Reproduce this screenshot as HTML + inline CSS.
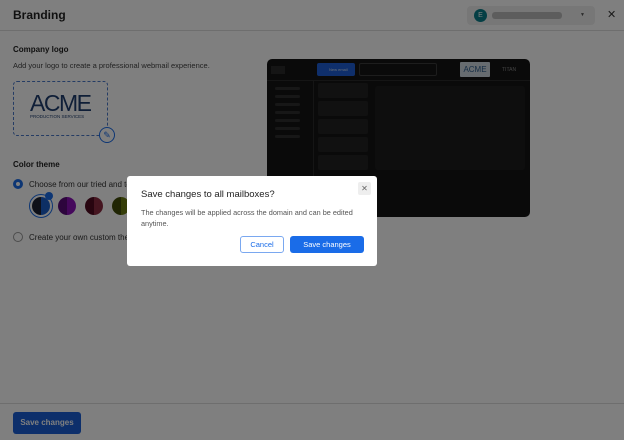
<!DOCTYPE html>
<html><head><style>
*{box-sizing:border-box;margin:0;padding:0}
body{width:624px;height:440px;overflow:hidden;font-family:"Liberation Sans",sans-serif;background:#fff;position:relative;color:#222}
.a{position:absolute}
.ov{position:absolute;left:0;top:0;width:624px;height:440px;background:#000;opacity:0.5}
.bar{height:3px;background:#2e2e2e;border-radius:2px}
</style></head><body>
<div class="a" style="left:13px;top:8px;font-size:12px;font-weight:bold;color:#222">Branding</div>
<div class="a" style="left:467px;top:6px;width:128px;height:19px;background:#eee;border-radius:4px"></div>
<div class="a" style="left:474px;top:9px;width:13px;height:13px;border-radius:50%;background:#0b7f8a;color:#fff;font-size:7px;text-align:center;line-height:13px">E</div>
<div class="a" style="left:492px;top:12px;width:70px;height:7px;background:#bbb;border-radius:3px"></div>
<div class="a" style="left:580px;top:12px;font-size:5px;color:#555">▼</div>
<div class="a" style="left:607px;top:8px;font-size:11px;color:#333">✕</div>
<div class="a" style="left:0;top:30px;width:624px;height:1px;background:#ddd"></div>
<div class="a" style="left:13px;top:45px;font-size:8px;font-weight:bold">Company logo</div>
<div class="a" style="left:13px;top:61px;font-size:7.5px;color:#444">Add your logo to create a professional webmail experience.</div>
<div class="a" style="left:13px;top:81px;width:95px;height:55px;border:1px dashed #4a78c8;border-radius:4px"></div>
<div class="a" style="left:30px;top:90px;font-size:23px;color:#1e3d6e;letter-spacing:-1.5px;font-weight:normal">ACME</div>
<div class="a" style="left:30px;top:114px;font-size:4.5px;color:#1e3d6e">PRODUCTION SERVICES</div>
<div class="a" style="left:99px;top:127px;width:16px;height:16px;border-radius:50%;background:#fff;border:1px solid #1a6ce8;color:#1a6ce8;font-size:9px;text-align:center;line-height:14px">✎</div>
<div class="a" style="left:13px;top:160px;font-size:8px;font-weight:bold">Color theme</div>
<div class="a" style="left:13px;top:179px;width:10px;height:10px;border-radius:50%;border:3px solid #1a6ce8"></div>
<div class="a" style="left:29px;top:180px;font-size:8px;color:#333">Choose from our tried and tested themes</div>
<div class="a" style="left:29px;top:194px;width:24px;height:24px;border-radius:50%;border:1.5px solid #1a6ce8"></div>
<div class="a" style="left:32px;top:197px;width:18px;height:18px;border-radius:50%;background:linear-gradient(90deg,#1c2030 50%,#1a5fc8 50%)"></div>
<div class="a" style="left:45px;top:192px;width:8px;height:8px;border-radius:50%;background:#1a6ce8"></div>
<div class="a" style="left:58px;top:197px;width:18px;height:18px;border-radius:50%;background:linear-gradient(90deg,#5a0a7a 50%,#8a10b8 50%)"></div>
<div class="a" style="left:85px;top:197px;width:18px;height:18px;border-radius:50%;background:linear-gradient(90deg,#500a20 50%,#8a2a40 50%)"></div>
<div class="a" style="left:112px;top:197px;width:18px;height:18px;border-radius:50%;background:linear-gradient(90deg,#404a08 50%,#6a7a10 50%)"></div>
<div class="a" style="left:13px;top:232px;width:10px;height:10px;border-radius:50%;border:1px solid #999"></div>
<div class="a" style="left:29px;top:233px;font-size:8px;color:#333">Create your own custom theme</div>
<div class="a" style="left:267px;top:59px;width:263px;height:158px;background:#151515;border-radius:5px">
 <div class="a" style="left:0;top:0;width:263px;height:22px;border-bottom:1px solid #2a2a2a"></div>
 <div class="a" style="left:4px;top:7px;width:14px;height:8px;background:#2a2a2a"></div>
 <div class="a" style="left:50px;top:4px;width:38px;height:13px;background:#1f5ed6;border-radius:2px;font-size:4px;color:#cde;padding:4px 0 0 12px">New email</div>
 <div class="a" style="left:92px;top:4px;width:78px;height:13px;border:1px solid #3a3a3a;border-radius:2px"></div>
 <div class="a" style="left:193px;top:3px;width:30px;height:15px;background:#cfd8e0;border-radius:1px;font-size:8px;color:#2a5a8a;text-align:center;line-height:15px">ACME</div>
 <div class="a" style="left:235px;top:8px;font-size:5px;color:#888">TITAN</div>
 <div class="a" style="left:46px;top:22px;width:1px;height:136px;background:#2a2a2a"></div>
 <div class="a" style="left:8px;top:28px;width:25px;"><div class="bar" style="margin-bottom:5px"></div><div class="bar" style="margin-bottom:5px"></div><div class="bar" style="margin-bottom:5px"></div><div class="bar" style="margin-bottom:5px"></div><div class="bar" style="margin-bottom:5px"></div><div class="bar" style="margin-bottom:5px"></div><div class="bar"></div></div>
 <div class="a" style="left:51px;top:24px;width:50px;height:15px;background:#222;border-radius:2px"></div>
 <div class="a" style="left:51px;top:42px;width:50px;height:15px;background:#222;border-radius:2px"></div>
 <div class="a" style="left:51px;top:60px;width:50px;height:15px;background:#222;border-radius:2px"></div>
 <div class="a" style="left:51px;top:78px;width:50px;height:15px;background:#222;border-radius:2px"></div>
 <div class="a" style="left:51px;top:96px;width:50px;height:15px;background:#222;border-radius:2px"></div>
 <div class="a" style="left:108px;top:27px;width:150px;height:84px;background:#1d1d1d;border-radius:3px"></div>
</div>
<div class="a" style="left:0;top:403px;width:624px;height:1px;background:#ddd"></div>
<div class="a" style="left:13px;top:412px;width:68px;height:22px;background:#1a5fd6;border-radius:3px;color:#fff;font-size:8px;font-weight:bold;text-align:center;line-height:22px">Save changes</div>
<div class="ov"></div>
<div class="a" style="left:127px;top:176px;width:250px;height:90px;background:#fff;border-radius:3px">
 <div class="a" style="left:14px;top:13px;font-size:9.5px;color:#222">Save changes to all mailboxes?</div>
 <div class="a" style="left:231px;top:6px;width:13px;height:13px;background:#eee;border-radius:2px;font-size:8px;color:#666;text-align:center;line-height:13px">✕</div>
 <div class="a" style="left:14px;top:31px;width:225px;font-size:7.3px;line-height:11px;color:#555">The changes will be applied across the domain and can be edited anytime.</div>
 <div class="a" style="left:113px;top:60px;width:44px;height:17px;border:1px solid #7aa8f0;border-radius:3px;font-size:7.5px;color:#1a6ce8;text-align:center;line-height:15px">Cancel</div>
 <div class="a" style="left:163px;top:60px;width:74px;height:17px;background:#1a6ce8;border-radius:3px;font-size:7.5px;color:#fff;text-align:center;line-height:17px">Save changes</div>
</div>
</body></html>
